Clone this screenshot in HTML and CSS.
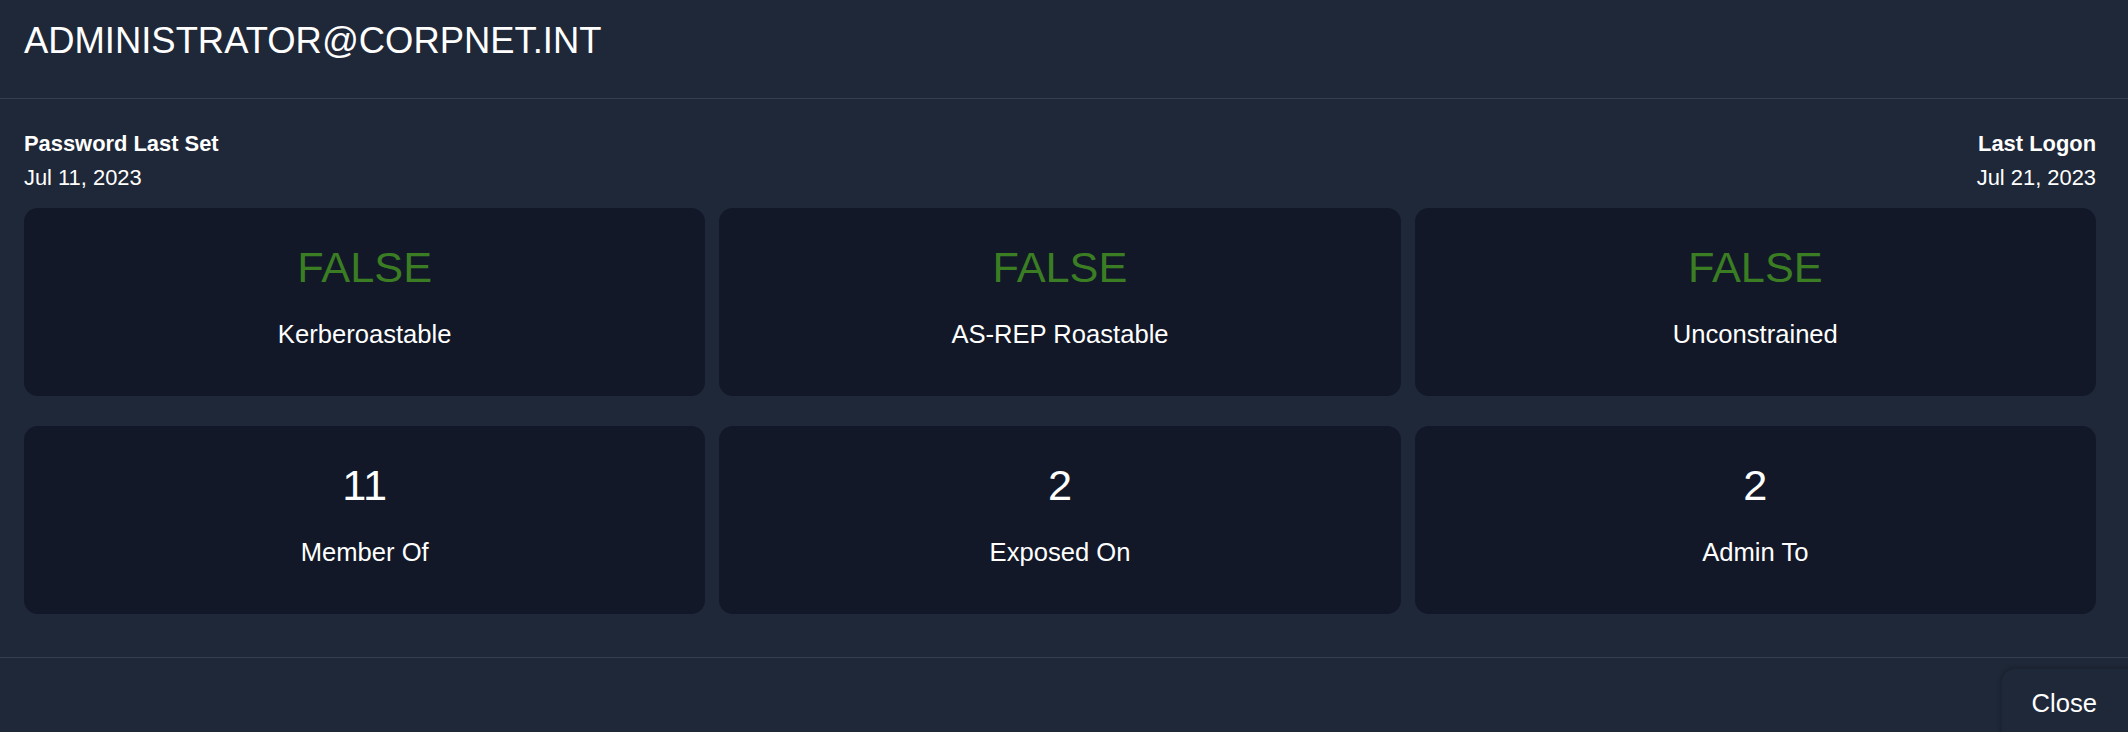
FILE: index.html
```html
<!DOCTYPE html>
<html lang="en">
<head>
<meta charset="utf-8">
<title>ADMINISTRATOR@CORPNET.INT</title>
<link rel="stylesheet" href="styles.css">
</head>
<body>
<div class="modal">
  <header class="modal-header">
    <h1 class="title">ADMINISTRATOR@CORPNET.INT</h1>
  </header>
  <section class="modal-body">
    <div class="meta">
      <div class="meta-item">
        <div class="meta-label">Password Last Set</div>
        <div class="meta-value">Jul 11, 2023</div>
      </div>
      <div class="meta-item right">
        <div class="meta-label">Last Logon</div>
        <div class="meta-value">Jul 21, 2023</div>
      </div>
    </div>
    <div class="cards">
      <div class="card"><div class="card-value ok">FALSE</div><div class="card-label">Kerberoastable</div></div>
      <div class="card"><div class="card-value ok">FALSE</div><div class="card-label">AS-REP Roastable</div></div>
      <div class="card"><div class="card-value ok">FALSE</div><div class="card-label">Unconstrained</div></div>
      <div class="card"><div class="card-value">11</div><div class="card-label">Member Of</div></div>
      <div class="card"><div class="card-value">2</div><div class="card-label">Exposed On</div></div>
      <div class="card"><div class="card-value">2</div><div class="card-label">Admin To</div></div>
    </div>
  </section>
  <footer class="modal-footer">
    <button class="close-btn" type="button">Close</button>
  </footer>
</div>
</body>
</html>
```

FILE: styles.css
```css
* { box-sizing: border-box; }
html, body {
  margin: 0;
  padding: 0;
  background: #1f2838;
  overflow: hidden;
}
body {
  font-family: "Liberation Sans", Arial, sans-serif;
  color: #ffffff;
}
.modal {
  width: 2128px;
  height: 732px;
  display: flex;
  flex-direction: column;
  overflow: hidden;
}
.modal-header {
  flex-shrink: 0;
  height: 99px;
  padding: 19px 24px 0 24px;
  border-bottom: 1px solid #363f4e;
}
.title {
  margin: 0;
  font-size: 36.4px;
  font-weight: 400;
  line-height: 43px;
}
.modal-body {
  flex-shrink: 0;
  padding: 27.5px 32px 0 24px;
  height: 559px;
  border-bottom: 1px solid #363f4e;
}
.meta {
  display: flex;
  justify-content: space-between;
}
.meta-item.right { text-align: right; }
.meta-label {
  font-size: 21.9px;
  font-weight: 700;
  line-height: 34px;
}
.meta-value {
  font-size: 21.9px;
  line-height: 33px;
}
.cards {
  margin-top: 14.5px;
  display: grid;
  grid-template-columns: repeat(3, 1fr);
  column-gap: 14px;
  row-gap: 30px;
}
.card {
  height: 188px;
  background: #121828;
  border-radius: 14px;
  display: flex;
  flex-direction: column;
  align-items: center;
  justify-content: center;
  gap: 23px;
  padding-bottom: 10px;
}
.card-value {
  font-size: 43.3px;
  line-height: 50px;
  color: #ffffff;
}
.card-value.ok { color: #3a7d22; }
.card-label {
  font-size: 25.6px;
  line-height: 38px;
}
.modal-footer {
  flex-shrink: 0;
  display: flex;
  justify-content: flex-end;
  padding: 10px 0 0 0;
}
.close-btn {
  font-family: "Liberation Sans", Arial, sans-serif;
  font-size: 25.6px;
  color: #ffffff;
  background: #1f2838;
  border: 1px solid #1c2433;
  border-radius: 14px;
  box-shadow: 0 0 4px rgba(0, 0, 0, 0.25);
  padding: 19px 44px 27px 30px;
  margin-right: -14px;
  line-height: 30px;
  flex-shrink: 0;
  cursor: pointer;
}
```
